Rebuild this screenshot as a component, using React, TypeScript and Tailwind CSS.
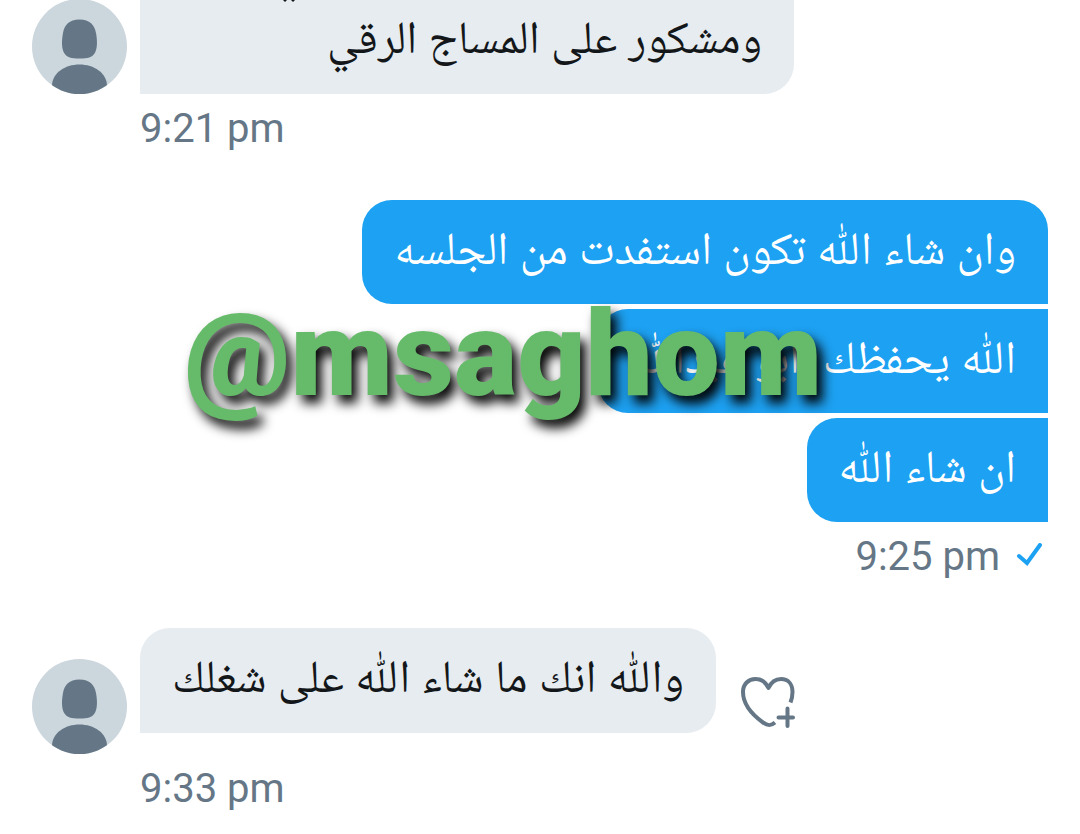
import type { ReactNode } from 'react';

interface BubbleProps {
  children: ReactNode;
  className: string;
}

function Bubble({ children, className }: BubbleProps) {
  return (
    <div
      dir="rtl"
      className={`px-8 text-[46px] font-['Roboto','Noto_Naskh_Arabic_UI','Noto_Naskh_Arabic','DejaVu_Sans',sans-serif] ${className}`}
    >
      {children}
    </div>
  );
}

function Avatar() {
  return (
    <svg className="w-[95px] h-[95px] shrink-0 rounded-full" viewBox="0 0 95 95" role="img" aria-label="Profile picture">
      <rect width="95" height="95" fill="#ccd6dd" />
      <path
        fill="#657786"
        d="M47.500 20.500C58 20.500 62.500 26 64 34C65.500 42 65.500 50 62.500 54.500C60 58.500 56 59.500 47.500 59.500C39 59.500 35 58.500 32.500 54.500C29.500 50 29.500 42 31 34C32.500 26 37 20.500 47.500 20.500Z"
      />
      <path fill="#657786" d="M47.500 65.500C62 65.500 75 74 75 87V95H20V87C20 74 33 65.500 47.500 65.500Z" />
    </svg>
  );
}

function HeartPlus() {
  return (
    <svg className="w-14 h-14" viewBox="0 0 56 56" fill="none" stroke="#657786" strokeWidth="4" aria-hidden="true">
      <path
        strokeLinejoin="round"
        d="M34 47.500C30 51 27 51 22 47.500C11 39.500 2 28.500 2 17C2 9 7.500 4 14.500 4C20.500 4 25 7.500 27.500 13C30 7.500 34 4 40 4C47 4 51.500 9 51.500 17C51.500 20.500 51 23.500 49.500 27.500"
      />
      <path d="M46.500 33.500V51M37.500 42.500H52" strokeLinecap="round" />
    </svg>
  );
}

const timeStyle = "font-['Roboto',sans-serif] text-[40px] leading-[48px] text-[#657786]";

export default function App() {
  return (
    <main className="w-full overflow-hidden bg-white">
      <section className="-mt-px flex items-end gap-[13px] pl-8">
        <Avatar />
        <Bubble className="relative h-[95px] w-[654px] rounded-br-[30px] bg-[#e6ecf0] pt-3 leading-[64px] text-[#14171a]">
          {/* tail of the line scrolled out of view */}
          <svg className="absolute top-0 left-[142px] h-[3px] w-4" viewBox="0 0 16 3" fill="#14171a" aria-hidden="true">
            <path d="M0 0H6L3 3ZM8 0H14L11 3Z" />
          </svg>
          ومشكور على المساج الرقي
        </Bubble>
      </section>
      <time className={`mt-[11px] block pl-[140px] ${timeStyle}`}>9:21 pm</time>

      <section className="relative mt-[47px] flex flex-col items-end gap-[5px] pr-8">
        <Bubble className="h-[104px] rounded-t-[30px] rounded-bl-[30px] bg-[#1da1f2] leading-[108px] whitespace-nowrap text-white">
          وان شاء اللّٰه تكون استفدت من الجلسه
        </Bubble>
        <Bubble className="h-[104px] rounded-l-[30px] bg-[#1da1f2] leading-[108px] whitespace-pre text-white">
          {'اللّٰه يحفظك  ابو عبداللّٰه'}
        </Bubble>
        <Bubble className="h-[104px] rounded-l-[30px] bg-[#1da1f2] leading-[108px] whitespace-nowrap text-white">
          ان شاء اللّٰه
        </Bubble>
        <p className="absolute top-[85px] left-[184px] font-['Roboto',sans-serif] text-[119px] leading-[140px] font-black text-[#66bb6a] [text-shadow:6px_8px_12px_#000]">
          @msaghom
        </p>
      </section>
      <div className="mt-[11px] flex items-center justify-end gap-4 pr-9">
        <time className={timeStyle}>9:25 pm</time>
        <svg className="h-7 w-7" viewBox="0 0 28 28" fill="none" stroke="#1da1f2" strokeWidth="4" strokeLinecap="round" aria-label="Sent">
          <path d="M3 13L11 20L24 2" />
        </svg>
      </div>

      <section className="mt-[47px] flex gap-[13px] pl-8">
        <div className="pt-[31px]">
          <Avatar />
        </div>
        <Bubble className="h-[105px] rounded-t-[30px] rounded-br-[30px] bg-[#e6ecf0] leading-[108px] whitespace-nowrap text-[#14171a]">
          واللّٰه انك ما شاء اللّٰه على شغلك
        </Bubble>
        <button type="button" aria-label="Add reaction" className="ml-3 mt-6 h-14 self-center">
          <HeartPlus />
        </button>
      </section>
      <time className={`mt-[11px] block pl-[140px] ${timeStyle}`}>9:33 pm</time>
    </main>
  );
}
